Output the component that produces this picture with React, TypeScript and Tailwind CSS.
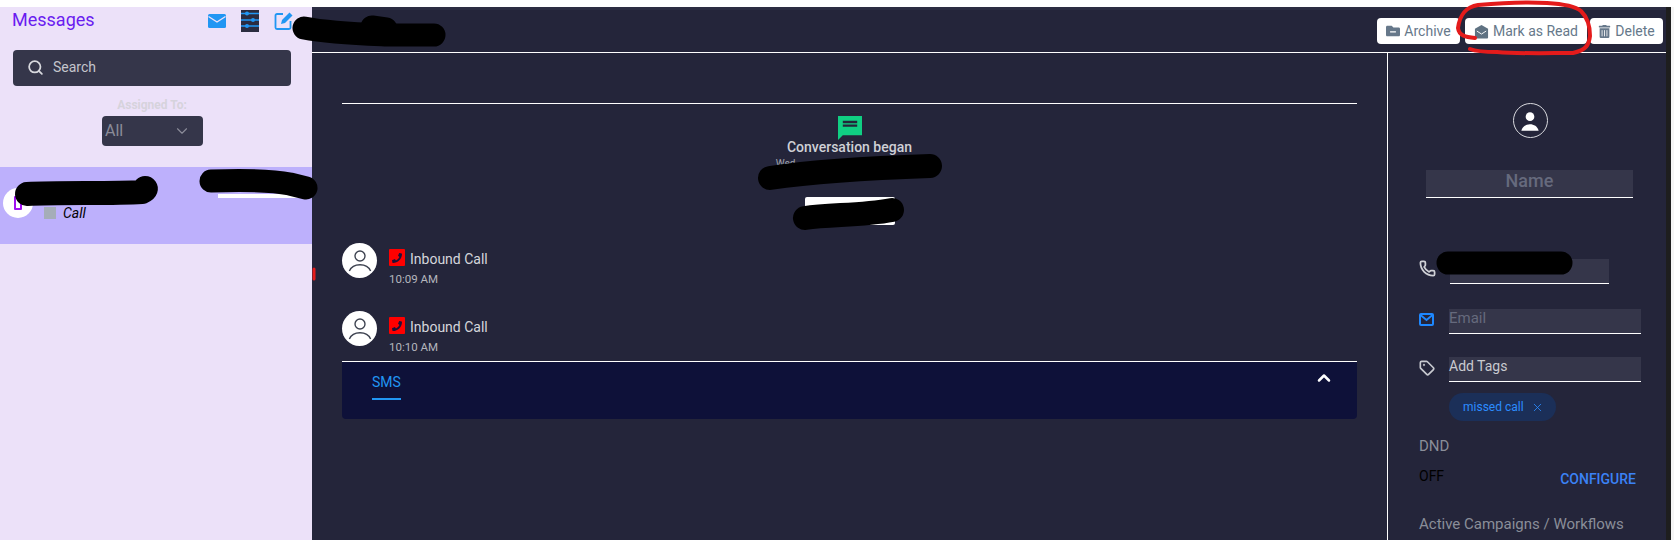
import React from 'react';
import { Search, ChevronDown, ChevronUp, Phone, Tag, X } from 'lucide-react';
import { FaFolderMinus, FaPhone, FaTrashAlt } from 'react-icons/fa';

const font = { fontFamily: 'Roboto, "Liberation Sans", sans-serif' };

const SidebarMail = () => (
  <svg viewBox="0 0 18 14" className="w-[18px] h-[14px]">
    <rect width="18" height="14" rx="1.5" fill="#2196f3" />
    <path d="M0.500 2.500L9 8l8.500-5.500" fill="none" stroke="#ece1f9" strokeWidth="1.400" />
  </svg>
);

const OutlineMail = () => (
  <svg viewBox="0 0 15 13" className="w-[15px] h-[13px] shrink-0">
    <rect x="1" y="1" width="13" height="11" rx="1" fill="none" stroke="#1e88ff" strokeWidth="2" />
    <path d="M1.500 2L7.500 7l6-5" fill="none" stroke="#1e88ff" strokeWidth="1.800" />
  </svg>
);

const SlidersIcon = () => (
  <svg viewBox="0 0 18 22" className="w-[18px] h-[22px] bg-[#2b2c40]">
    <g fill="none" stroke="#2196f3" strokeWidth="1.6">
      <path d="M0 3.500h18M0 10h18M0 16h18" />
    </g>
    <g fill="#2196f3">
      <circle cx="6" cy="3.500" r="2" />
      <circle cx="12" cy="10" r="2" />
      <circle cx="6" cy="16" r="2" />
    </g>
  </svg>
);

const ComposeIcon = () => (
  <svg viewBox="0 0 20 20" className="w-[20px] h-[20px]" fill="none" stroke="#2196f3">
    <path d="M9 3H3a1.500 1.500 0 0 0-1.500 1.500v12A1.500 1.500 0 0 0 3 18h12a1.500 1.500 0 0 0 1.500-1.500V10" strokeWidth="1.800" />
    <path d="M7 13l1-4 7.500-7.500 3 3L11 12z" fill="#2196f3" stroke="none" />
  </svg>
);

const OpenMail = () => (
  <svg viewBox="0 0 16 16" className="w-[15px] h-[15px]">
    <path d="M8 1l7 4v9.500a1 1 0 0 1-1 1H2a1 1 0 0 1-1-1V5z" fill="#5f7282" />
    <path d="M3 7.500l5 3.200 5-3.200" fill="none" stroke="#fff" strokeWidth="1" />
  </svg>
);

const CallBadge = () => (
  <span className="w-[16px] h-[17px] bg-[#f00] rounded-[1px] flex items-center justify-center">
    <FaPhone size={10} className="text-[#1d1238]" />
  </span>
);

const Avatar = () => (
  <div className="w-[35px] h-[35px] rounded-full bg-white flex items-center justify-center shrink-0">
    <svg viewBox="0 0 24 24" className="w-[30px] h-[30px]" fill="none" stroke="#3d4250" strokeWidth="1.100">
      <circle cx="12" cy="8" r="4" />
      <path d="M3.500 20c1.500-3.500 5-5 8.500-5s7 1.500 8.500 5" />
    </svg>
  </div>
);

const ActionButton = ({ icon, label, className }: { icon: React.ReactNode; label: string; className: string }) => (
  <button className={`h-[26px] bg-white rounded-[4px] flex items-center justify-center gap-[4px] text-[14px] text-[#66788a] ${className}`}>
    {icon}
    {label}
  </button>
);

const CallRow = ({ time }: { time: string }) => (
  <div className="flex gap-[12px] h-[35px]">
    <Avatar />
    <div>
      <div className="flex items-center gap-[5px] h-[17px] mt-[6px] text-[14px] text-[#d5d6dc]">
        <CallBadge />
        <span className="mt-[4px]">Inbound Call</span>
      </div>
      <div className="text-[11.500px] text-[#b4b6bd] mt-[6px] leading-[14px]">{time}</div>
    </div>
  </div>
);

function App() {
  return (
    <div style={font} className="relative w-full h-[540px] overflow-hidden bg-white pt-[7px] flex">
      {/* left list */}
      <aside className="w-[312px] h-full bg-[#ece1f9] shrink-0">
        <div className="flex items-center h-[26px] pl-[12px]">
          <span className="text-[18px] text-[#6a1cf0] w-[196px] -mt-[2px]">Messages</span>
          <div className="flex items-center mt-[2px]">
            <SidebarMail />
            <span className="ml-[15px]"><SlidersIcon /></span>
            <span className="ml-[15px]"><ComposeIcon /></span>
          </div>
        </div>
        <div className="ml-[13px] w-[278px] mt-[17px] h-[36px] bg-[#35364a] rounded-[4px] flex items-center pl-[14px] gap-[9px] text-[14px] text-[#c4c5cc] pb-[1px]">
          <Search size={17} strokeWidth={2.500} className="text-[#d8d9de]" />
          Search
        </div>
        <div className="w-[304px] text-center text-[12px] font-bold text-[#d6d3dc] mt-[12px] leading-[14px]">Assigned To:</div>
        <div className="ml-[102px] w-[101px] h-[30px] mt-[4px] bg-[#35364a] rounded-[4px] flex items-center justify-between pl-[3px] pr-[12px] text-[16px] text-[#8b8c99]">
          All
          <ChevronDown size={18} strokeWidth={1.500} className="text-[#8b8c99]" />
        </div>
        <div className="relative h-[77px] mt-[21px] bg-[#bdb0fc]">
          <div className="absolute left-[3px] top-[21px] w-[30px] h-[30px] rounded-full bg-white flex items-center justify-center">
            <div className="w-[8px] h-[14px] border-2 border-[#a010f0] rounded-[1px]" />
          </div>
          <div className="absolute left-[44px] top-[38px] flex items-center gap-[7px] text-[14px] italic text-black leading-[16px]">
            <span className="w-[12px] h-[12px] bg-[#a5adb8]" />
            Call
          </div>
          <div className="absolute left-[218px] top-[27px] w-[80px] h-[4px] bg-white" />
        </div>
      </aside>

      {/* conversation */}
      <main className="flex-1 bg-[#24253a] flex flex-col min-w-0">
        <header className="h-[46px] border-t-[3px] border-t-[#2c2d42] border-b border-b-white flex items-start justify-end pt-[8px] pr-[3px]">
          <ActionButton className="w-[83px]" icon={<FaFolderMinus size={14} />} label="Archive" />
          <ActionButton className="w-[122px] ml-[5px]" icon={<OpenMail />} label="Mark as Read" />
          <ActionButton className="w-[73px] ml-[3px]" icon={<FaTrashAlt size={13} />} label="Delete" />
        </header>
        <div className="flex flex-1 min-h-0">
          <section className="w-[1076px] border-r border-white px-[30px] shrink-0">
            <div className="border-t border-white mt-[50px] flex flex-col items-center pt-[12px]">
              <svg viewBox="2 2 20 20" className="w-[24px] h-[24px]" fill="#10cf83">
                <path d="M22 2H2v20l4-4h16zM6 9h12v2H6zm0-3h12v2H6z" fillRule="evenodd" />
              </svg>
              <div className="text-[14px] font-medium text-[#cfd0d6] -mt-[2px] leading-[18px]">Conversation began</div>
              <div className="text-[10px] text-[#a6a8b0] leading-[12px] mt-[2px] pr-[128px]">Wed</div>
              <div className="w-[90px] h-[28px] bg-white rounded-[2px] mt-[27px]" />
            </div>
            <div className="mt-[18px] flex flex-col gap-[33px]">
              <CallRow time="10:09 AM" />
              <CallRow time="10:10 AM" />
            </div>
            <div className="mt-[15px] h-[58px] border-t border-white bg-[#0e1139] rounded-b-[4px] flex justify-between pl-[30px] pr-[23px]">
              <div className="mt-[12px] h-[26px] border-b-2 border-[#2196f3] text-[14px] text-[#2196f3] leading-[16px]">SMS</div>
              <ChevronUp size={20} strokeWidth={3} className="text-white mt-[6px]" />
            </div>
          </section>

          {/* contact */}
          <section className="flex-1 min-w-0 pl-[31px] pr-[25px]">
            <div className="flex justify-center mt-[50px]">
              <div className="w-[35px] h-[35px] rounded-full border border-[#d8d9de] flex items-center justify-center overflow-hidden">
                <svg viewBox="0 0 24 24" className="w-[26px] h-[26px]" fill="#fff">
                  <circle cx="12" cy="8" r="4" />
                  <path d="M4 21c1-4 4.500-6 8-6s7 2 8 6z" />
                </svg>
              </div>
            </div>
            <div className="ml-[7px] mr-[8px] mt-[32px] h-[28px] bg-[#35364a] border-b border-white text-center text-[18px] font-medium text-[#666a7d] leading-[22px]">Name</div>

            <div className="flex items-center mt-[60px] h-[26px]">
              <Phone size={17} strokeWidth={2.500} className="text-[#d0d1d6] shrink-0 -mt-[6px]" />
              <div className="ml-[14px] w-[159px] h-[25px] bg-[#35364a] border-b border-white" />
            </div>
            <div className="flex items-center mt-[24px] h-[26px]">
              <span className="-mt-[3px]"><OutlineMail /></span>
              <div className="ml-[15px] flex-1 h-[25px] bg-[#35364a] border-b border-white text-[15px] text-[#666a7d] leading-[18px]">Email</div>
            </div>
            <div className="flex items-center mt-[22px] h-[26px]">
              <Tag size={16} strokeWidth={2.500} className="text-[#c8cad0] shrink-0 -mt-[2px]" />
              <div className="ml-[14px] flex-1 h-[25px] bg-[#35364a] border-b border-white text-[14px] text-[#c9cad0] leading-[18px]">Add Tags</div>
            </div>
            <div className="ml-[30px] mt-[11px] w-[107px] h-[28px] rounded-full bg-[#1b2f58] flex items-center pl-[14px] gap-[7px] text-[12px] text-[#2b8cff]">
              missed call
              <X size={13} strokeWidth={1.500} />
            </div>
            <div className="text-[15px] text-[#8a8e99] mt-[16px] leading-[18px]">DND</div>
            <div className="flex justify-between mt-[13px] pr-[5px]">
              <span className="text-[14px] text-black leading-[16px]">OFF</span>
              <span className="text-[14px] font-medium text-[#3b82f6] mt-[3px] leading-[16px]">CONFIGURE</span>
            </div>
            <div className="text-[15px] text-[#8a8e99] mt-[28px] leading-[18px] whitespace-nowrap">Active Campaigns / Workflows</div>
          </section>
        </div>
      </main>

      <div className="w-[5px] h-full bg-[#1e1e1e] shrink-0" />
      <div className="w-[3px] h-full bg-[#f5f5f5] shrink-0" />

      {/* marker scribbles drawn on top of the screenshot */}
      <svg className="absolute inset-0 w-[1674px] h-[540px] pointer-events-none" viewBox="0 0 1674 540" fill="none" strokeLinecap="round" strokeLinejoin="round">
        <g stroke="#000">
          <path d="M304 28C330 33 360 34 385 35L434 35" strokeWidth="23" />
          <path d="M372 27L386 29" strokeWidth="23" />
          <path d="M27 194C60 192 110 194 142 192 147 190 146 188 145 188" strokeWidth="24" />
          <path d="M211 181C240 180 270 180 290 184L306 188" strokeWidth="23" />
          <path d="M770 178C810 172 870 168 930 166" strokeWidth="24" />
          <path d="M805 218C830 214 860 216 892 210" strokeWidth="24" />
          <path d="M1448 263H1561" strokeWidth="23" />
        </g>
        <path d="M1475 38C1466 37 1459 36 1458 28 1460 14 1466 7 1478 5 1500 3 1530 2 1547 3 1565 4 1576 7 1581 11 1588 18 1590 28 1590 36 1589 44 1587 50 1573 53 1550 53 1520 54 1497 52 1485 52 1475 51 1470 49" stroke="#e41b1b" strokeWidth="4" />
        <path d="M314 269V279" stroke="#e41b1b" strokeWidth="3" />
      </svg>
    </div>
  );
}

export default App;
